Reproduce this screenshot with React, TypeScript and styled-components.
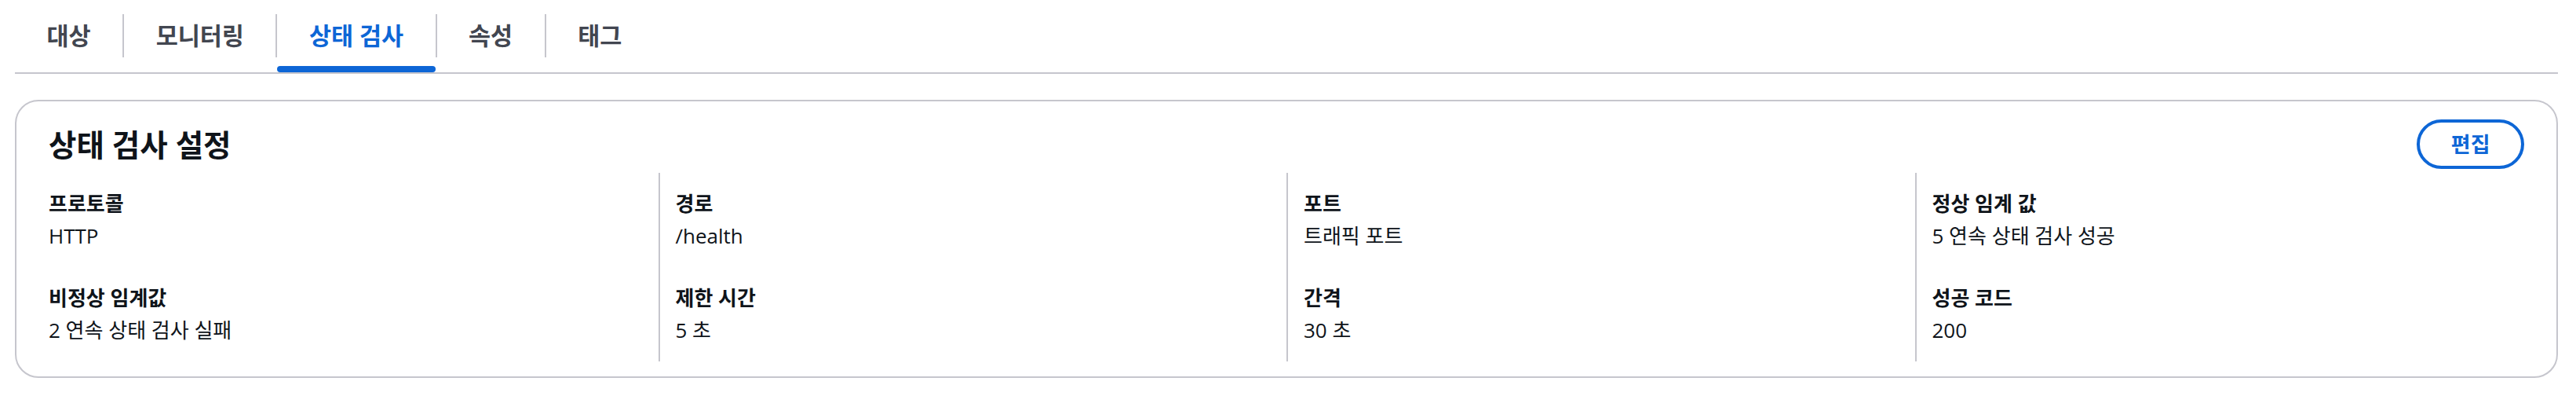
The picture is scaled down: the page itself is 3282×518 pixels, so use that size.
import React from "react";
import styled, { createGlobalStyle } from "styled-components";

const FONT = `"Open Sans", "Noto Sans CJK KR", sans-serif`;
const BLUE = "#0d66d6";
const BORDER = "#c6c6cd";
const TEXT = "#0f141a";

const GlobalStyle = createGlobalStyle`
  html, body {
    margin: 0;
    padding: 0;
    background: #ffffff;
  }
  body {
    font-family: ${FONT};
    color: ${TEXT};
    -webkit-font-smoothing: antialiased;
  }
`;

const Page = styled.div`
  width: 3240px;
  padding-left: 19px;
`;

const TabList = styled.nav`
  display: flex;
  align-items: flex-start;
  border-bottom: 2px solid ${BORDER};
`;

const Tab = styled.div`
  display: flex;
  align-items: flex-start;
`;

const TabSeparator = styled.div`
  width: 2px;
  height: 55px;
  margin-top: 18px;
  background: ${BORDER};
`;

const TabBody = styled.div`
  display: flex;
  flex-direction: column;
`;

const TabLabel = styled.div<{ $active: boolean }>`
  margin-top: 18px;
  height: 55px;
  line-height: 55px;
  padding: 0 40.5px;
  font-size: 30.5px;
  font-weight: 700;
  white-space: nowrap;
  color: ${(p) => (p.$active ? BLUE : "#424650")};
`;

const TabIndicator = styled.div<{ $active: boolean }>`
  margin-top: 11px;
  height: 8px;
  border-radius: 4px;
  background: ${(p) => (p.$active ? BLUE : "transparent")};
`;

const Card = styled.section`
  margin-top: 33px;
  border: 2px solid ${BORDER};
  border-radius: 30px;
  padding: 23px 41px 19px 41px;
`;

const CardHeader = styled.div`
  display: flex;
  align-items: center;
  justify-content: space-between;
  height: 63px;
`;

const Title = styled.h2`
  margin: 0;
  font-size: 38.5px;
  line-height: 42px;
  font-weight: 700;
  color: ${TEXT};
`;

const EditButton = styled.button`
  box-sizing: border-box;
  height: 63px;
  padding: 0 39.5px;
  border: 4px solid ${BLUE};
  border-radius: 32px;
  background: #ffffff;
  color: ${BLUE};
  font-family: ${FONT};
  font-size: 27px;
  font-weight: 700;
  line-height: 38px;
  cursor: pointer;
`;

const Columns = styled.div`
  display: grid;
  grid-template-columns: repeat(4, 1fr);
  margin: 5px -24px 0 -24px;
`;

const Column = styled.div`
  display: flex;
  flex-direction: column;
  gap: 41px;
  padding: 20px 20px 21px 20px;
  border-left: 2px solid ${BORDER};

  &:first-child {
    border-left: none;
    padding-left: 24px;
  }
`;

const Pair = styled.div`
  display: flex;
  flex-direction: column;
  gap: 3px;
`;

const Label = styled.div`
  font-size: 26px;
  line-height: 38px;
  font-weight: 700;
  color: ${TEXT};
`;

const Value = styled.div`
  font-size: 26px;
  line-height: 38px;
  font-weight: 400;
  color: ${TEXT};
`;

const tabs = ["대상", "모니터링", "상태 검사", "속성", "태그"];
const activeTab = "상태 검사";

const columns: { label: string; value: string }[][] = [
  [
    { label: "프로토콜", value: "HTTP" },
    { label: "비정상 임계값", value: "2 연속 상태 검사 실패" },
  ],
  [
    { label: "경로", value: "/health" },
    { label: "제한 시간", value: "5 초" },
  ],
  [
    { label: "포트", value: "트래픽 포트" },
    { label: "간격", value: "30 초" },
  ],
  [
    { label: "정상 임계 값", value: "5 연속 상태 검사 성공" },
    { label: "성공 코드", value: "200" },
  ],
];

export default function App() {
  return (
    <>
      <GlobalStyle />
      <Page>
        <TabList>
          {tabs.map((t, i) => {
            const active = t === activeTab;
            return (
              <Tab key={t}>
                {i > 0 && <TabSeparator />}
                <TabBody>
                  <TabLabel $active={active}>{t}</TabLabel>
                  <TabIndicator $active={active} />
                </TabBody>
              </Tab>
            );
          })}
        </TabList>
        <Card>
          <CardHeader>
            <Title>상태 검사 설정</Title>
            <EditButton>편집</EditButton>
          </CardHeader>
          <Columns>
            {columns.map((col, ci) => (
              <Column key={ci}>
                {col.map((kv) => (
                  <Pair key={kv.label}>
                    <Label>{kv.label}</Label>
                    <Value>{kv.value}</Value>
                  </Pair>
                ))}
              </Column>
            ))}
          </Columns>
        </Card>
      </Page>
    </>
  );
}
